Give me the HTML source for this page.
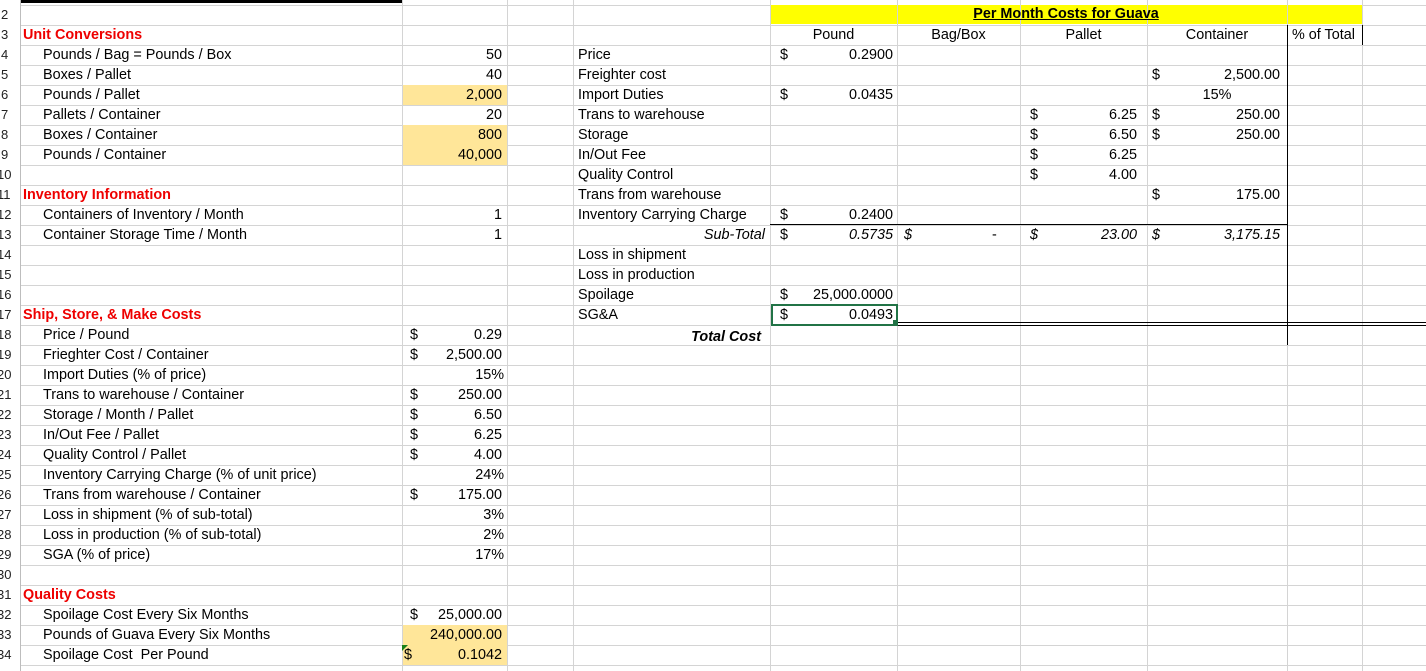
<!DOCTYPE html>
<html><head><meta charset="utf-8"><style>
body{margin:0;width:1426px;height:671px;overflow:hidden;background:#fff;position:relative;font-family:"Liberation Sans",sans-serif;font-size:14.4px;color:#000}
.g{position:absolute;left:20px;top:5px;width:1406px;height:666px;background:repeating-linear-gradient(to bottom,#d4d4d4 0,#d4d4d4 1px,transparent 1px,transparent 20px)}
.v{position:absolute;top:0;width:1px;height:671px;background:#d4d4d4}
.hdr{position:absolute;left:0;top:0;width:20px;height:671px;background:#fff;border-right:1px solid #bdbdbd}
.n{position:absolute;left:1px;width:19px;height:20px;line-height:20px;font-size:13px;color:#222}
.c{position:absolute;height:20px;line-height:20px;white-space:nowrap}
.r{text-align:right}
.red{color:#e00;font-weight:bold}
.hl{position:absolute;background:#ffe699}
</style></head><body>
<div class="g"></div>
<div class="hl" style="left:402px;top:85px;width:105px;height:20px"></div>
<div class="hl" style="left:402px;top:125px;width:105px;height:40px"></div>
<div class="hl" style="left:402px;top:625px;width:105px;height:40px"></div>
<div style="position:absolute;left:770px;top:5px;width:592px;height:19px;background:#ffff00"></div>
<div class="v" style="left:402px"></div><div class="v" style="left:507px"></div><div class="v" style="left:573px"></div><div class="v" style="left:770px"></div><div class="v" style="left:897px"></div><div class="v" style="left:1020px"></div><div class="v" style="left:1147px"></div><div class="v" style="left:1287px"></div><div class="v" style="left:1362px"></div>
<div style="position:absolute;left:20px;top:0;width:382px;height:3px;background:#000"></div>
<div style="position:absolute;left:1287px;top:25px;width:1px;height:320px;background:#000"></div>
<div style="position:absolute;left:1362px;top:25px;width:1px;height:20px;background:#000"></div>
<div style="position:absolute;left:770px;top:224px;width:518px;height:1px;background:#000"></div>
<div style="position:absolute;left:897px;top:322px;width:529px;height:1px;background:#000"></div>
<div style="position:absolute;left:897px;top:325px;width:529px;height:1px;background:#000"></div>
<div style="position:absolute;left:771px;top:304px;width:123px;height:18px;border:2px solid #217346"></div>
<div style="position:absolute;left:893px;top:320px;width:4px;height:4px;background:#217346"></div>
<div style="position:absolute;left:402px;top:645px;width:0;height:0;border-top:6px solid #1a7f1a;border-right:6px solid transparent"></div>
<div class="hdr">
<div class="n" style="top:5px">2</div><div class="n" style="top:25px">3</div><div class="n" style="top:45px">4</div><div class="n" style="top:65px">5</div><div class="n" style="top:85px">6</div><div class="n" style="top:105px">7</div><div class="n" style="top:125px">8</div><div class="n" style="top:145px">9</div><div class="n" style="top:165px;left:-3px">10</div><div class="n" style="top:185px;left:-3px">11</div><div class="n" style="top:205px;left:-3px">12</div><div class="n" style="top:225px;left:-3px">13</div><div class="n" style="top:245px;left:-3px">14</div><div class="n" style="top:265px;left:-3px">15</div><div class="n" style="top:285px;left:-3px">16</div><div class="n" style="top:305px;left:-3px">17</div><div class="n" style="top:325px;left:-3px">18</div><div class="n" style="top:345px;left:-3px">19</div><div class="n" style="top:365px;left:-3px">20</div><div class="n" style="top:385px;left:-3px">21</div><div class="n" style="top:405px;left:-3px">22</div><div class="n" style="top:425px;left:-3px">23</div><div class="n" style="top:445px;left:-3px">24</div><div class="n" style="top:465px;left:-3px">25</div><div class="n" style="top:485px;left:-3px">26</div><div class="n" style="top:505px;left:-3px">27</div><div class="n" style="top:525px;left:-3px">28</div><div class="n" style="top:545px;left:-3px">29</div><div class="n" style="top:565px;left:-3px">30</div><div class="n" style="top:585px;left:-3px">31</div><div class="n" style="top:605px;left:-3px">32</div><div class="n" style="top:625px;left:-3px">33</div><div class="n" style="top:645px;left:-3px">34</div>
</div>

<div class="c red" style="left:23px;top:25px">Unit Conversions</div>
<div class="c" style="left:43px;top:45px">Pounds / Bag = Pounds / Box</div>
<div class="c" style="left:43px;top:65px">Boxes / Pallet</div>
<div class="c" style="left:43px;top:85px">Pounds / Pallet</div>
<div class="c" style="left:43px;top:105px">Pallets / Container</div>
<div class="c" style="left:43px;top:125px">Boxes / Container</div>
<div class="c" style="left:43px;top:145px">Pounds / Container</div>
<div class="c red" style="left:23px;top:185px">Inventory Information</div>
<div class="c" style="left:43px;top:205px">Containers of Inventory / Month</div>
<div class="c" style="left:43px;top:225px">Container Storage Time / Month</div>
<div class="c red" style="left:23px;top:305px">Ship, Store, &amp; Make Costs</div>
<div class="c" style="left:43px;top:325px">Price / Pound</div>
<div class="c" style="left:43px;top:345px">Frieghter Cost / Container</div>
<div class="c" style="left:43px;top:365px">Import Duties (% of price)</div>
<div class="c" style="left:43px;top:385px">Trans to warehouse / Container</div>
<div class="c" style="left:43px;top:405px">Storage / Month / Pallet</div>
<div class="c" style="left:43px;top:425px">In/Out Fee / Pallet</div>
<div class="c" style="left:43px;top:445px">Quality Control / Pallet</div>
<div class="c" style="left:43px;top:465px">Inventory Carrying Charge (% of unit price)</div>
<div class="c" style="left:43px;top:485px">Trans from warehouse / Container</div>
<div class="c" style="left:43px;top:505px">Loss in shipment (% of sub-total)</div>
<div class="c" style="left:43px;top:525px">Loss in production (% of sub-total)</div>
<div class="c" style="left:43px;top:545px">SGA (% of price)</div>
<div class="c red" style="left:23px;top:585px">Quality Costs</div>
<div class="c" style="left:43px;top:605px">Spoilage Cost Every Six Months</div>
<div class="c" style="left:43px;top:625px">Pounds of Guava Every Six Months</div>
<div class="c" style="left:43px;top:645px">Spoilage Cost&nbsp; Per Pound</div>

<div class="c r" style="right:924px;top:45px">50</div>
<div class="c r" style="right:924px;top:65px">40</div>
<div class="c r" style="right:924px;top:85px">2,000</div>
<div class="c r" style="right:924px;top:105px">20</div>
<div class="c r" style="right:924px;top:125px">800</div>
<div class="c r" style="right:924px;top:145px">40,000</div>
<div class="c r" style="right:924px;top:205px">1</div>
<div class="c r" style="right:924px;top:225px">1</div>
<div class="c r" style="right:924px;top:325px">0.29</div>
<div class="c r" style="right:924px;top:345px">2,500.00</div>
<div class="c r" style="right:922px;top:365px">15%</div>
<div class="c r" style="right:924px;top:385px">250.00</div>
<div class="c r" style="right:924px;top:405px">6.50</div>
<div class="c r" style="right:924px;top:425px">6.25</div>
<div class="c r" style="right:924px;top:445px">4.00</div>
<div class="c r" style="right:922px;top:465px">24%</div>
<div class="c r" style="right:924px;top:485px">175.00</div>
<div class="c r" style="right:922px;top:505px">3%</div>
<div class="c r" style="right:922px;top:525px">2%</div>
<div class="c r" style="right:922px;top:545px">17%</div>
<div class="c r" style="right:924px;top:605px">25,000.00</div>
<div class="c r" style="right:924px;top:625px">240,000.00</div>
<div class="c r" style="right:924px;top:645px">0.1042</div>
<div class="c" style="left:410px;top:325px">$</div><div class="c" style="left:410px;top:345px">$</div><div class="c" style="left:410px;top:385px">$</div><div class="c" style="left:410px;top:405px">$</div><div class="c" style="left:410px;top:425px">$</div><div class="c" style="left:410px;top:445px">$</div><div class="c" style="left:410px;top:485px">$</div><div class="c" style="left:410px;top:605px">$</div><div class="c" style="left:404px;top:645px">$</div>

<div class="c" style="left:578px;top:45px">Price</div>
<div class="c" style="left:578px;top:65px">Freighter cost</div>
<div class="c" style="left:578px;top:85px">Import Duties</div>
<div class="c" style="left:578px;top:105px">Trans to warehouse</div>
<div class="c" style="left:578px;top:125px">Storage</div>
<div class="c" style="left:578px;top:145px">In/Out Fee</div>
<div class="c" style="left:578px;top:165px">Quality Control</div>
<div class="c" style="left:578px;top:185px">Trans from warehouse</div>
<div class="c" style="left:578px;top:205px">Inventory Carrying Charge</div>
<div class="c r" style="right:661px;top:225px;font-style:italic">Sub-Total</div>
<div class="c" style="left:578px;top:245px">Loss in shipment</div>
<div class="c" style="left:578px;top:265px">Loss in production</div>
<div class="c" style="left:578px;top:285px">Spoilage</div>
<div class="c" style="left:578px;top:305px">SG&amp;A</div>
<div class="c r" style="right:665px;top:327px;font-weight:bold;font-style:italic">Total Cost</div>

<div class="c" style="left:770px;top:4px;width:592px;text-align:center;font-weight:bold;text-decoration:underline">Per Month Costs for Guava</div>
<div class="c" style="left:770px;top:25px;width:127px;text-align:center">Pound</div>
<div class="c" style="left:897px;top:25px;width:123px;text-align:center">Bag/Box</div>
<div class="c" style="left:1020px;top:25px;width:127px;text-align:center">Pallet</div>
<div class="c" style="left:1147px;top:25px;width:140px;text-align:center">Container</div>
<div class="c" style="left:1292px;top:25px">% of Total</div>

<div class="c" style="left:780px;top:45px">$</div><div class="c r" style="right:533px;top:45px">0.2900</div>
<div class="c" style="left:780px;top:85px">$</div><div class="c r" style="right:533px;top:85px">0.0435</div>
<div class="c" style="left:780px;top:205px">$</div><div class="c r" style="right:533px;top:205px">0.2400</div>
<div class="c" style="left:780px;top:225px">$</div><div class="c r" style="right:533px;top:225px;font-style:italic">0.5735</div>
<div class="c" style="left:780px;top:285px">$</div><div class="c r" style="right:533px;top:285px">25,000.0000</div>
<div class="c" style="left:780px;top:305px">$</div><div class="c r" style="right:533px;top:305px">0.0493</div>
<div class="c" style="left:904px;top:225px;font-style:italic">$</div><div class="c" style="left:992px;top:225px">-</div>
<div class="c" style="left:1030px;top:105px">$</div><div class="c r" style="right:289px;top:105px">6.25</div>
<div class="c" style="left:1030px;top:125px">$</div><div class="c r" style="right:289px;top:125px">6.50</div>
<div class="c" style="left:1030px;top:145px">$</div><div class="c r" style="right:289px;top:145px">6.25</div>
<div class="c" style="left:1030px;top:165px">$</div><div class="c r" style="right:289px;top:165px">4.00</div>
<div class="c" style="left:1030px;top:225px;font-style:italic">$</div><div class="c r" style="right:289px;top:225px;font-style:italic">23.00</div>
<div class="c" style="left:1152px;top:65px">$</div><div class="c r" style="right:146px;top:65px">2,500.00</div>
<div class="c" style="left:1147px;top:85px;width:140px;text-align:center">15%</div>
<div class="c" style="left:1152px;top:105px">$</div><div class="c r" style="right:146px;top:105px">250.00</div>
<div class="c" style="left:1152px;top:125px">$</div><div class="c r" style="right:146px;top:125px">250.00</div>
<div class="c" style="left:1152px;top:185px">$</div><div class="c r" style="right:146px;top:185px">175.00</div>
<div class="c" style="left:1152px;top:225px;font-style:italic">$</div><div class="c r" style="right:146px;top:225px;font-style:italic">3,175.15</div>
</body></html>
